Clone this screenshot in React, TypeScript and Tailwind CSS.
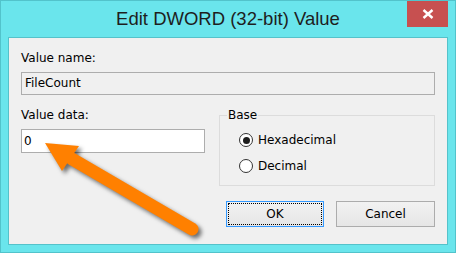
import React from 'react';

const ui = { fontFamily: '"DejaVu Sans", "Liberation Sans", sans-serif' };

function Radio({ label, checked }: { label: string; checked?: boolean }) {
  return (
    <label className="flex h-[16px] items-center gap-[5px] text-[12px] leading-[15px] text-black">
      <span className="flex h-[14px] w-[14px] items-center justify-center rounded-full border border-[#333] bg-white">
        {checked && <span className="h-[7px] w-[7px] rounded-full bg-[#1c1c1c]" />}
      </span>
      {label}
    </label>
  );
}

function Button({ children, focused }: { children: React.ReactNode; focused?: boolean }) {
  return (
    <button
      className={
        focused
          ? 'relative h-[26px] w-[98px] border border-[#3399ff] bg-gradient-to-b from-[#f2f2f2] to-[#e6e6e6] text-[12px] text-black'
          : 'relative h-[26px] w-[99px] border border-[#acacac] bg-gradient-to-b from-[#f2f2f2] to-[#e6e6e6] text-[12px] text-black'
      }
    >
      {focused && <span className="absolute inset-[1px] border border-dotted border-black" />}
      {children}
    </button>
  );
}

export default function App() {
  return (
    <div className="relative h-[253px] w-[456px] overflow-hidden border border-[#52c3cb] bg-[#6ae5ec] px-[7px] pb-[7px]" style={ui}>
      {/* title bar */}
      <div className="relative flex h-[36px] justify-center pt-[8px]">
        <span
          className="text-[18.5px] leading-[20px] text-[#1e1e1e]"
          style={{ fontFamily: '"Liberation Sans", Arial, sans-serif' }}
        >
          Edit DWORD (32-bit) Value
        </span>
        <div className="absolute right-0 top-0 flex h-[26px] w-[41px] items-center justify-center bg-[#c75050]">
          <svg width="12" height="10" viewBox="0 0 12 10">
            <path d="M1.5 1 L10.5 9 M10.5 1 L1.5 9" stroke="white" strokeWidth="2.4" />
          </svg>
        </div>
      </div>

      {/* client */}
      <div className="h-[208px] border border-[#55c2ca] bg-[#f0f0f0] px-[12px] pt-[13px] text-[12px] leading-[15px] text-black">
        <div>Value name:</div>
        <div className="mt-[6px] flex h-[23px] items-center border border-[#adadad] bg-[#f0f0f0] pl-[3px]">FileCount</div>

        <div className="mt-[13px] flex gap-[14px]">
          <div className="w-[184px]">
            <div>Value data:</div>
            <div className="mt-[6px] flex h-[24px] items-center border border-[#adadad] bg-white pl-[2px]">0</div>
          </div>
          <fieldset className="h-[78px] w-[216px] border border-[#dcdcdc]">
            <legend className="ml-[7px] px-[1px]">Base</legend>
            <div className="mt-[9px] flex flex-col gap-[10px] pl-[19px]">
              <Radio label="Hexadecimal" checked />
              <Radio label="Decimal" />
            </div>
          </fieldset>
        </div>

        <div className="mt-[15px] flex justify-end gap-[12px]">
          <Button focused>OK</Button>
          <Button>Cancel</Button>
        </div>
      </div>

      {/* annotation arrow */}
      <svg
        className="pointer-events-none absolute left-[-1px] top-[-1px]"
        width="456"
        height="253"
        viewBox="0 0 456 253"
        style={{ filter: 'drop-shadow(3px 3px 2px rgba(0,0,0,0.55))' }}
      >
        <line x1="72" y1="159" x2="192" y2="229" stroke="#ff8000" strokeWidth="13" strokeLinecap="round" />
        <polygon points="45,143 79,146 62,171" fill="#ff8000" />
      </svg>
    </div>
  );
}
